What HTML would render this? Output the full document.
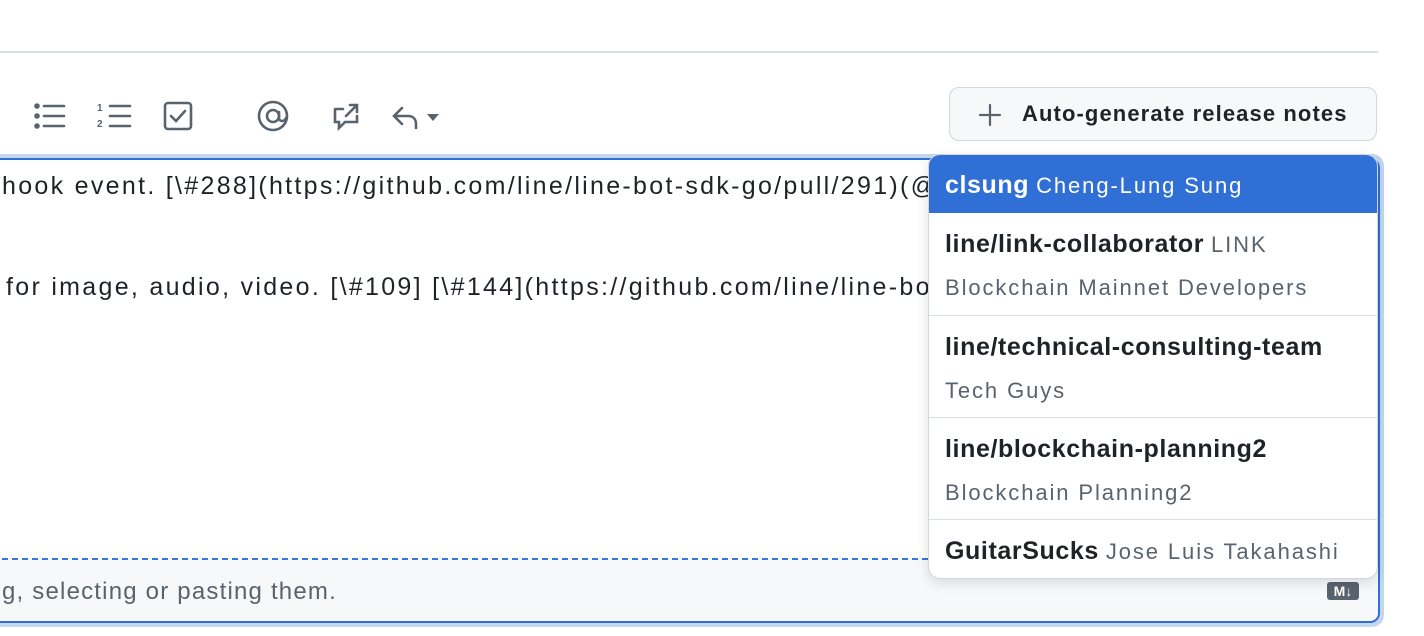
<!DOCTYPE html><html><head><style>
body{margin:0;width:1424px;height:636px;background:#fff;font-family:"Liberation Sans",sans-serif;position:relative;overflow:hidden;color:#1f2328}
.a{position:absolute}
.hr{left:0;top:51px;width:1378px;height:2px;background:#d8dee4}
.ring{left:-20px;top:154px;width:1404px;height:473px;border-radius:12px;background:#c4d6f0}
.box{left:-20px;top:158px;width:1396px;height:461px;border:2px solid #2f6fd6;border-radius:10px;background:#fff;overflow:hidden}
.foot{left:0;top:398px;width:100%;height:63px;background:#f6f8fa;border-top:2px dashed #3a78d6}
.t{font-size:25px;letter-spacing:2.3px;white-space:nowrap}
.btn{left:949px;top:87px;width:426px;height:52px;border:1px solid #d0d7de;border-radius:10px;background:#f6f8fa;font-size:22px;font-weight:bold;line-height:52px;color:#1f2328;letter-spacing:1.1px}
.dd{left:928px;top:154px;width:448px;height:423px;border:1px solid #d0d7de;border-radius:12px;background:#fff;box-shadow:0 4px 12px rgba(0,0,0,.12);overflow:hidden}
.r{position:absolute;left:0;width:100%;border-bottom:1px solid #d8dee4;font-size:25px;white-space:nowrap}
.n{font-weight:bold;letter-spacing:0.6px}
.s{color:#59636e;font-size:22px;letter-spacing:1.9px;font-weight:normal}
</style></head><body>
<div class="a hr"></div>
<svg class="a" style="left:30px;top:100px" width="420" height="34" viewBox="0 0 420 34" fill="none" stroke="#59636e" stroke-width="2.6" stroke-linecap="round">
<circle cx="7" cy="6" r="1.5" fill="#59636e"/><circle cx="7" cy="16" r="1.5" fill="#59636e"/><circle cx="7" cy="26" r="1.5" fill="#59636e"/>
<path d="M14 6h20M14 16h20M14 26h20"/>
<path d="M80 6h20M80 16h20M80 26h20"/>
<text x="67" y="11" font-size="10" fill="#59636e" stroke="none" font-family="Liberation Sans" font-weight="bold">1</text><text x="67" y="27" font-size="10" fill="#59636e" stroke="none" font-family="Liberation Sans" font-weight="bold">2</text>
<rect x="135" y="3" width="26" height="26" rx="3"/><path d="M141 16l5 5 9-10"/>
<circle cx="243" cy="16" r="14"/><circle cx="243" cy="16" r="6"/><path d="M249 12v6c0 4 6 4 7 0"/>
<path d="M305 9v13h4v6l6-6h12v-6M316 16l11-11M320 5h7v7M305 9h8"/>
<path d="M372 8l-8 8 8 8M364 16h14c5 0 8 3 8 8v4"/>
<path d="M397 14h12l-6 7z" fill="#59636e" stroke="none"/>
</svg>
<div class="a btn"><svg class="a" style="left:28px;top:15px" width="24" height="24" viewBox="0 0 24 24" stroke="#59636e" stroke-width="2.2" stroke-linecap="round"><path d="M12 2v20M2 12h20"/></svg><span style="position:absolute;left:72px">Auto-generate release notes</span></div>
<div class="a ring"></div>
<div class="a box">
<div class="a t" style="left:20px;top:12px">hook event. [\#288](https://github.com/line/line-bot-sdk-go/pull/291)(@</div>
<div class="a t" style="left:24px;top:113px">for image, audio, video. [\#109] [\#144](https://github.com/line/line-bot</div>
<div class="a foot"><div class="a t" style="left:20px;top:18px;color:#59636e;font-size:24px;letter-spacing:1.2px">g, selecting or pasting them.</div>
<div class="a" style="left:1345px;top:22px;width:32px;height:18px;background:#59636e;border-radius:3px;color:#fff;font-size:14px;font-weight:bold;text-align:center;line-height:18px">M↓</div></div>
</div>
<div class="a dd">
<div class="r" style="top:0;height:58px;background:#2f6fd6;color:#fff;border:0"><div class="a" style="left:16px;top:16px"><span class="n">clsung</span> <span class="s" style="color:#fff">Cheng-Lung Sung</span></div></div>
<div class="r" style="top:58px;height:102px"><div class="a" style="left:16px;top:17px"><span class="n">line/link-collaborator</span> <span class="s">LINK</span></div><div class="a s" style="left:16px;top:62px">Blockchain Mainnet Developers</div></div>
<div class="r" style="top:161px;height:101px"><div class="a n" style="left:16px;top:17px">line/technical-consulting-team</div><div class="a s" style="left:16px;top:62px">Tech Guys</div></div>
<div class="r" style="top:263px;height:101px"><div class="a n" style="left:16px;top:17px">line/blockchain-planning2</div><div class="a s" style="left:16px;top:62px">Blockchain Planning2</div></div>
<div class="r" style="top:365px;height:58px;border:0"><div class="a" style="left:16px;top:17px"><span class="n">GuitarSucks</span> <span class="s">Jose Luis Takahashi</span></div></div>
</div>
</body></html>
